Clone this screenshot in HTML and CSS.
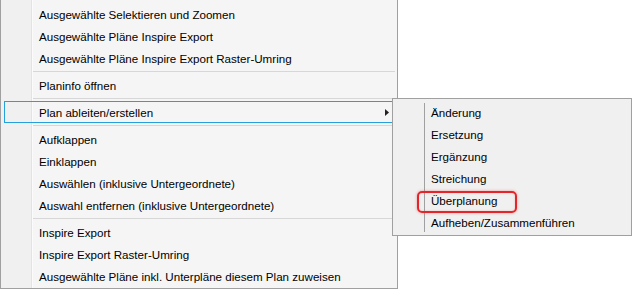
FILE: index.html
```html
<!DOCTYPE html>
<html>
<head>
<meta charset="utf-8">
<link rel="stylesheet" href="styles.css">
</head>
<body>
<div class="menu">
  <div class="item">Ausgewählte Selektieren und Zoomen</div>
  <div class="item">Ausgewählte Pläne Inspire Export</div>
  <div class="item">Ausgewählte Pläne Inspire Export Raster-Umring</div>
  <div class="sep"></div>
  <div class="item">Planinfo öffnen</div>
  <div class="sep"></div>
  <div class="item hover"><span>Plan ableiten/erstellen</span><svg class="arrow" width="4" height="7" viewBox="0 0 4 7"><path d="M0 0 L4 3.5 L0 7 Z" fill="#222"/></svg></div>
  <div class="sep"></div>
  <div class="item">Aufklappen</div>
  <div class="item">Einklappen</div>
  <div class="item">Auswählen (inklusive Untergeordnete)</div>
  <div class="item">Auswahl entfernen (inklusive Untergeordnete)</div>
  <div class="sep"></div>
  <div class="item">Inspire Export</div>
  <div class="item">Inspire Export Raster-Umring</div>
  <div class="item">Ausgewählte Pläne inkl. Unterpläne diesem Plan zuweisen</div>
</div>
<div class="submenu">
  <div class="sitem">Änderung</div>
  <div class="sitem">Ersetzung</div>
  <div class="sitem">Ergänzung</div>
  <div class="sitem">Streichung</div>
  <div class="sitem">Überplanung</div>
  <div class="sitem">Aufheben/Zusammenführen</div>
  <div class="mark"></div>
</div>
</body>
</html>
```
FILE: styles.css
```css
html, body {
  margin: 0;
  padding: 0;
  background: #ffffff;
}
body {
  width: 638px;
  height: 290px;
  overflow: hidden;
  position: relative;
  font-family: "Liberation Sans", Arial, sans-serif;
  font-size: 11.6px;
  color: #000;
}
.menu {
  box-sizing: border-box;
  width: 398px;
  border: 1px solid #a0a0a0;
  border-top: 0;
  padding: 3px 0 1px 0;
  background: linear-gradient(to right, #f0f0f0 0 30px, #e3e3e3 30px 31px, #fbfbfb 31px 32px, #f5f5f5 32px);
}
.item {
  box-sizing: border-box;
  height: 22px;
  line-height: 18px;
  margin: 0 3px;
  padding: 2px 4px 0 34px;
  border: 1px solid transparent;
  white-space: nowrap;
  display: flex;
  align-items: center;
  justify-content: space-between;
}
.item.hover {
  border-color: #26a0da;
}
.arrow {
  display: block;
  margin-top: -1px;
}
.sep {
  height: 1px;
  margin: 2px 2px 2px 32px;
  background: #d7d7d7;
}
.submenu {
  position: absolute;
  left: 392px;
  top: 98px;
  box-sizing: border-box;
  width: 240px;
  height: 138px;
  border: 1px solid #a0a0a0;
  padding: 2px 0 1px 0;
  background: linear-gradient(#a0a0a0, #a0a0a0) no-repeat 31px 4px / 1px 129px, #f0f0f0;
}
.sitem {
  box-sizing: border-box;
  height: 22px;
  line-height: 20px;
  padding: 2px 0 0 38px;
  white-space: nowrap;
}
.mark {
  position: absolute;
  left: 24px;
  top: 92px;
  box-sizing: border-box;
  width: 100px;
  height: 22px;
  border: 2px solid #e3262b;
  border-radius: 5px;
  box-shadow: 0 0 3px rgba(230, 40, 40, 0.45), inset 0 0 2px rgba(230, 40, 40, 0.3);
}
```
